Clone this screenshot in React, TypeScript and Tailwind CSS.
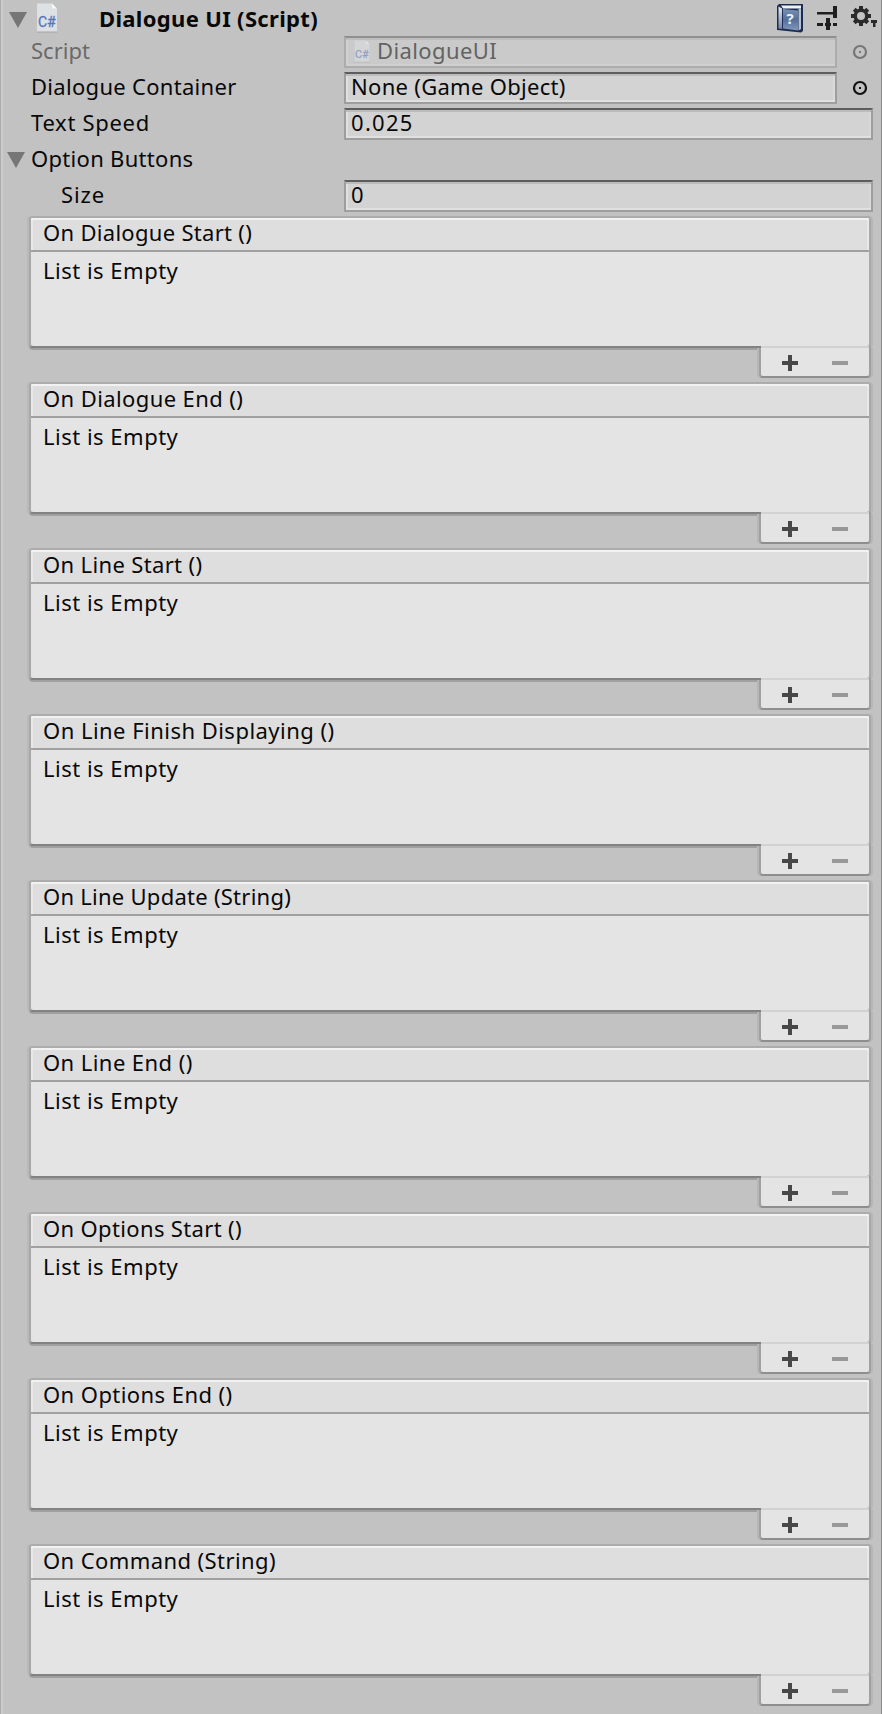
import type { ReactNode } from "react";

const events: { name: string; tracking: string }[] = [
  { name: "On Dialogue Start ()", tracking: "tracking-[0.300px]" },
  { name: "On Dialogue End ()", tracking: "tracking-[0.400px]" },
  { name: "On Line Start ()", tracking: "tracking-[0.350px]" },
  { name: "On Line Finish Displaying ()", tracking: "tracking-[0.470px]" },
  { name: "On Line Update (String)", tracking: "tracking-[0.260px]" },
  { name: "On Line End ()", tracking: "tracking-[0.430px]" },
  { name: "On Options Start ()", tracking: "tracking-[0.350px]" },
  { name: "On Options End ()", tracking: "tracking-[0.430px]" },
  { name: "On Command (String)", tracking: "tracking-[0.410px]" },
];

function Foldout() {
  return (
    <svg width="18" height="16" viewBox="0 0 18 16" className="shrink-0">
      <path d="M0 0H18L9 16Z" fill="#767676" />
    </svg>
  );
}

function ScriptIcon({ className }: { className: string }) {
  return (
    <svg viewBox="0 0 22 30" className={className}>
      <path d="M1 1.500H16L21 6.500V29.500H1Z" fill="#8f8f8f" opacity="0.6" />
      <path d="M1 0.500H16L21 5.500V28.500H1Z" fill="#dde1e4" />
      <path d="M16 0.500V5.500H21Z" fill="#f7f8f9" />
      <text x="10.800" y="23.500" textAnchor="middle" fontFamily="Roboto, sans-serif" fontSize="14" fill="#5676bd" stroke="#5676bd" strokeWidth="0.300">
        C#
      </text>
    </svg>
  );
}

function HelpIcon() {
  return (
    <svg width="26" height="29" viewBox="0 0 26 29">
      <defs>
        <linearGradient id="cover" x1="0" y1="0" x2="0" y2="1">
          <stop offset="0" stopColor="#7790b3" />
          <stop offset="0.500" stopColor="#54709b" />
          <stop offset="1" stopColor="#8199bb" />
        </linearGradient>
        <linearGradient id="spine" x1="0" y1="0" x2="0" y2="1">
          <stop offset="0" stopColor="#e6ebf2" />
          <stop offset="1" stopColor="#7188ab" />
        </linearGradient>
      </defs>
      <path d="M2 0H26V27L24 28.500L0 26V2Z" fill="#1d2c50" />
      <path d="M4 1.500H24V4.500H6Z" fill="#f0f3f6" />
      <path d="M1.500 2.500L5 4.500V25L1.500 24.500Z" fill="url(#spine)" />
      <path d="M6 5L21 6.500V26.500L6 24.500Z" fill="url(#cover)" />
      <path d="M21.500 4.500H24V25L21.500 26.500Z" fill="#b4c0d0" />
      <text x="13.200" y="19.800" textAnchor="middle" fontFamily="Noto Sans, sans-serif" fontSize="15" fontWeight="700" fill="#eaf0f8">
        ?
      </text>
    </svg>
  );
}

function PresetIcon() {
  return (
    <svg width="20" height="24" viewBox="0 0 20 24" fill="#1f1f1f">
      <path d="M0 6H16V0H20V12H16V8.500H0Z" />
      <path d="M0 17H6V20H0ZM9 12H13V24H9V20H8V17H9ZM13 17H14V20H13ZM16 17H20V20H16Z" />
    </svg>
  );
}

function GearIcon() {
  return (
    <svg width="27" height="24" viewBox="0 0 27 24">
      <g fill="#2a2a2a">
        <g>
          <rect x="8" y="0" width="4" height="20" />
          <rect x="0" y="8" width="20" height="4" />
          <rect x="8" y="0.500" width="4" height="19" transform="rotate(45 10 10)" />
          <rect x="8" y="0.500" width="4" height="19" transform="rotate(-45 10 10)" />
        </g>
        <circle cx="10" cy="10" r="7.500" />
        <path d="M20 14H26V17H24.500V21H22V17H20Z" />
      </g>
      <circle cx="10" cy="10" r="4" fill="#c2c2c2" />
    </svg>
  );
}

function Picker({ className }: { className: string }) {
  return (
    <svg width="16" height="16" viewBox="0 0 16 16" className={className}>
      <circle cx="8" cy="8" r="6" fill="none" stroke="currentColor" strokeWidth="2.200" />
      <rect x="7" y="7" width="2" height="2" fill="currentColor" />
    </svg>
  );
}

function Field({ children, picker, disabled }: { children: ReactNode; picker?: boolean; disabled?: boolean }) {
  return (
    <>
      <div
        className={
          "flex h-8 items-center border-2 pb-[5px] " +
          (disabled
            ? "border-[#acacac] border-t-[#8f8f8f] bg-[#cacaca] text-[#636363] shadow-[inset_0_2px_0_#bebebe,inset_2px_-2px_0_#d0d0d0] "
            : "border-[#9e9e9e] border-t-[#5d5d5d] bg-[#d3d3d3] shadow-[inset_0_2px_0_#bcbcbc,inset_2px_-2px_0_#e0e0e0,inset_-2px_0_0_#dadada] ") +
          (picker ? "w-[493px]" : "w-[529px]")
        }
      >
        {children}
      </div>
      {picker && <Picker className={disabled ? "ml-[15px] text-[#777777]" : "ml-[15px] text-[#111111]"} />}
    </>
  );
}

function Row({ label, children }: { label: ReactNode; children?: ReactNode }) {
  return (
    <div className="flex h-9 items-center">
      <div className="flex w-[344px] shrink-0 items-center pb-[5px]">{label}</div>
      {children}
    </div>
  );
}

function EventList({ name, tracking }: { name: string; tracking: string }) {
  return (
    <section className="h-[166px] pl-[29px]">
      <div className="h-[132px] w-[842px] rounded-[4px] border-2 border-x-[#a9a9a9] border-t-[#acacac] border-b-[#828282] bg-[#e4e4e4] shadow-[0_2px_0_#a0a0a0,-2px_0_0_#b9b9b9,2px_0_0_#b6b6b6]">
        <h2 className={"h-[34px] rounded-t-[2px] border-b-2 border-[#a0a0a0] bg-[#dedede] pl-[12px] leading-[29px] shadow-[inset_0_2px_0_#f2f2f2,inset_2px_0_0_#e8e8e8,inset_-2px_0_0_#e8e8e8] " + tracking}>
          {name}
        </h2>
        <p className="pl-[12px] pt-[4px] leading-[29px] tracking-[0.500px]">List is Empty</p>
      </div>
      <div className="relative -mt-[2px] ml-[732px] h-[2px] w-[108px] bg-[#d2d2d2]" />
      <div className="relative ml-[730px] flex h-[30px] w-[112px] items-center rounded-b-[4px] border-2 border-t-0 border-x-[#a0a0a0] border-b-[#8e8e8e] bg-[#e4e4e4] shadow-[-2px_0_0_#b6b6b6,2px_0_0_#b6b6b6]">
        <button aria-label="Add" className="ml-[21px] mt-[2px] block h-4 w-4">
          <svg width="16" height="16" viewBox="0 0 16 16">
            <path d="M6 0H10V6H16V10H10V16H6V10H0V6H6Z" fill="#484848" />
          </svg>
        </button>
        <button aria-label="Remove" className="ml-[34px] mt-[2px] block h-4 w-4">
          <svg width="16" height="16" viewBox="0 0 16 16">
            <path d="M0 6H16V10H0Z" fill="#989898" />
          </svg>
        </button>
      </div>
    </section>
  );
}

export default function App() {
  return (
    <main className="h-[1714px] w-[882px] overflow-hidden border-r border-[#8d8d8d] bg-[#c2c2c2] font-['Noto_Sans',sans-serif] text-[22px] leading-[30px] text-[#080808] shadow-[inset_1px_0_0_#adadad,inset_3px_0_0_#cbcbcb]">
      <header className="flex h-[34px] items-start">
        <div className="ml-[9px] mt-[12px]">
          <Foldout />
        </div>
        <ScriptIcon className="ml-[9px] mt-[3px] h-[30px] w-[22px]" />
        <h1 className="ml-[41px] mt-[3px] w-[678px] font-bold tracking-[0.330px]">Dialogue UI (Script)</h1>
        <div className="mt-[4px] w-[40px]">
          <HelpIcon />
        </div>
        <div className="mt-[6px] w-[34px]">
          <PresetIcon />
        </div>
        <div className="mt-[6px]">
          <GearIcon />
        </div>
      </header>
      <Row label={<span className="pl-[31px] text-[#6a6a6a]">Script</span>}>
        <Field picker disabled>
          <ScriptIcon className="ml-[7px] mt-[3px] h-[23px] w-[18px] opacity-50" />
          <span className="ml-[6px] tracking-[0.400px]">DialogueUI</span>
        </Field>
      </Row>
      <Row label={<span className="pl-[31px] tracking-[0.300px]">Dialogue Container</span>}>
        <Field picker>
          <span className="ml-[5px] tracking-[0.300px]">None (Game Object)</span>
        </Field>
      </Row>
      <Row label={<span className="pl-[31px] tracking-[0.700px]">Text Speed</span>}>
        <Field>
          <span className="ml-[5px] tracking-[1.300px]">0.025</span>
        </Field>
      </Row>
      <Row
        label={
          <>
            <span className="ml-[7px] pt-[4px]">
              <Foldout />
            </span>
            <span className="ml-[6px] tracking-[0.300px]">Option Buttons</span>
          </>
        }
      />
      <Row label={<span className="pl-[61px] tracking-[0.900px]">Size</span>}>
        <Field>
          <span className="ml-[5px]">0</span>
        </Field>
      </Row>
      <div className="pt-[2px]">
        {events.map((event) => (
          <EventList key={event.name} {...event} />
        ))}
      </div>
    </main>
  );
}
